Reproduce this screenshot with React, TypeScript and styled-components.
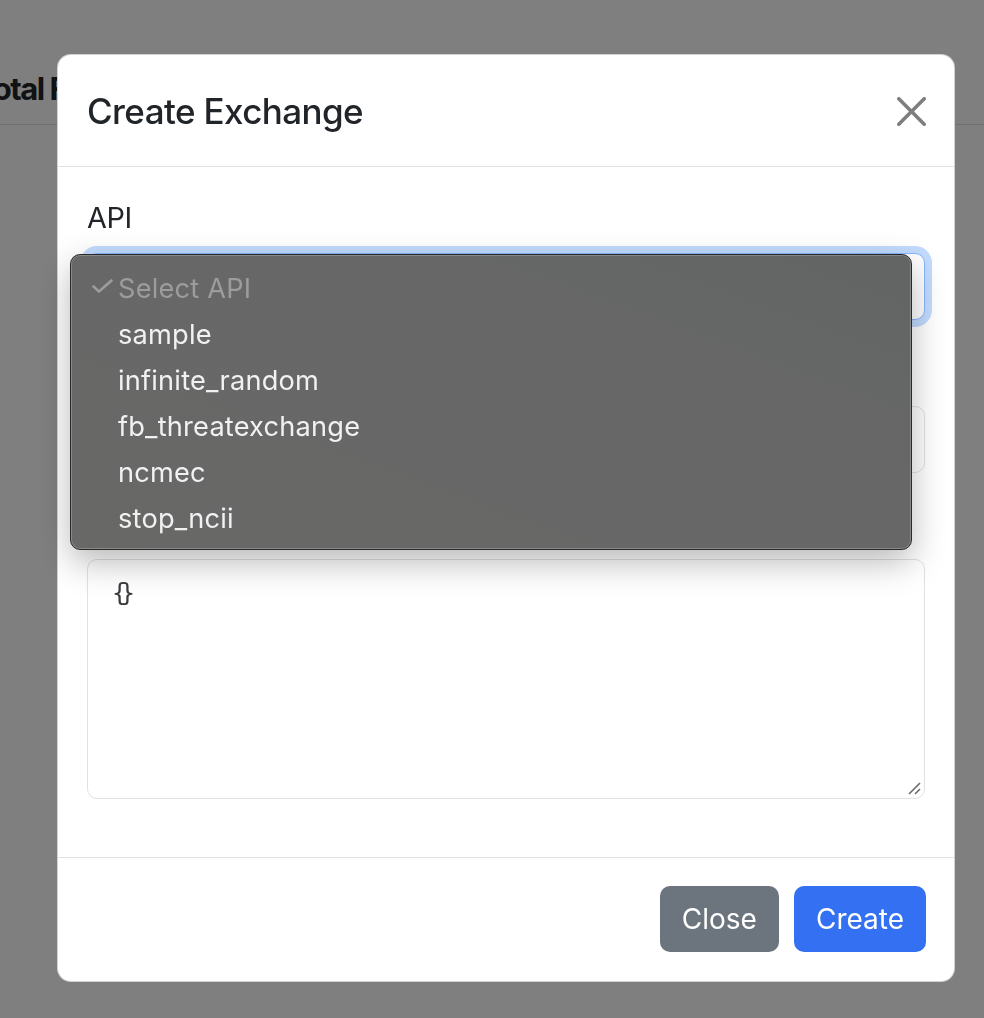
import React from "react";
import styled, { createGlobalStyle } from "styled-components";

const Global = createGlobalStyle`
  html, body { margin: 0; padding: 0; }
  body {
    width: 984px;
    height: 1018px;
    overflow: hidden;
    background: #ffffff;
    font-family: Inter, "Noto Sans", "Liberation Sans", sans-serif;
    color: #212529;
  }
  * { box-sizing: border-box; }
`;

const Page = styled.div`
  width: 984px;
  height: 1018px;
  background: #ffffff;
`;

const PageHeader = styled.div`
  height: 125px;
  border-bottom: 1px solid #dee2e6;
  display: flex;
  align-items: flex-start;
  padding-top: 70px;
  overflow: hidden;
`;

const PageTitle = styled.h2`
  margin: 0 0 0 -24px;
  font-size: 31px;
  line-height: 1.2;
  font-weight: 700;
  letter-spacing: -1.5px;
  color: #212529;
  white-space: nowrap;
`;

const Backdrop = styled.div`
  position: fixed;
  inset: 0;
  background: rgba(0, 0, 0, 0.5);
  padding: 54px 0 0 57px;
`;

const Modal = styled.div`
  width: 898px;
  background: #fff;
  border-radius: 14px;
  border: 1px solid rgba(0, 0, 0, 0.175);
  display: flex;
  flex-direction: column;
`;

const ModalHeader = styled.div`
  display: flex;
  align-items: center;
  justify-content: space-between;
  padding: 29px 28px 28px 29px;
  border-bottom: 1px solid #dee2e6;
`;

const ModalTitle = styled.h5`
  margin: 0;
  font-size: 35px;
  line-height: 54px;
  font-weight: 500;
  color: #212529;
  letter-spacing: -0.6px;
`;

const CloseX = styled.button`
  width: 29px;
  height: 29px;
  padding: 0;
  border: 0;
  background: transparent;
  opacity: 0.5;
  display: flex;
  align-items: center;
  justify-content: center;
  cursor: pointer;
`;

const ModalBody = styled.div`
  padding: 29px 29px 29px 29px;
  display: flex;
  flex-direction: column;
`;

const Field = styled.div`
  margin-bottom: 29px;
  display: flex;
  flex-direction: column;
`;

const Label = styled.label`
  font-size: 28.8px;
  line-height: 43px;
  margin-bottom: 14px;
  letter-spacing: -0.4px;
  color: #212529;
`;

const SelectWrap = styled.div`
  position: relative;
`;

const SelectBox = styled.div<{ $focused?: boolean }>`
  height: 67px;
  border: 1px solid ${(p) => (p.$focused ? "#86b7fe" : "#dee2e6")};
  border-radius: 10px;
  background: #fff;
  box-shadow: ${(p) => (p.$focused ? "0 0 0 7px rgba(13,110,253,0.25)" : "none")};
`;

const Menu = styled.ul`
  position: absolute;
  left: -17px;
  top: 1px;
  width: 842px;
  margin: 0;
  padding: 10px 0 8px 0;
  list-style: none;
  background: linear-gradient(200deg, #626564 0%, #676767 35%, #686867 100%);
  border: 1px solid #2a2a2a;
  border-radius: 10px;
  box-shadow: inset 0 0 0 1px rgba(255, 255, 255, 0.22), 0 12px 34px rgba(0, 0, 0, 0.28);
  z-index: 5;
`;

const MenuItem = styled.li<{ $disabled?: boolean }>`
  height: 46px;
  display: flex;
  align-items: center;
  padding-left: 47px;
  position: relative;
  font-family: Inter, "Noto Sans", sans-serif;
  font-size: 27.2px;
  letter-spacing: 0.2px;
  color: ${(p) => (p.$disabled ? "#9b9c9c" : "#f1f1f1")};
`;

const Check = styled.svg`
  position: absolute;
  left: 21px;
  top: 14px;
`;

const TextArea = styled.div`
  height: 240px;
  border: 1px solid #dee2e6;
  border-radius: 10px;
  padding: 14px 21px 11px 24px;
  font-family: "DejaVu Sans Mono", "Liberation Mono", monospace;
  font-size: 25px;
  line-height: 1.5;
  letter-spacing: -7px;
  color: #3a3d40;
  position: relative;
`;

const Grip = styled.svg`
  position: absolute;
  right: 2px;
  bottom: 2px;
`;

const ModalFooter = styled.div`
  border-top: 1px solid #dee2e6;
  padding: 28px 28px 29px 28px;
  display: flex;
  justify-content: flex-end;
  gap: 15px;
`;

const Button = styled.button<{ $variant: "secondary" | "primary" }>`
  height: 66px;
  padding: 0 22px;
  border: 0;
  border-radius: 10px;
  font-family: Inter, "Noto Sans", sans-serif;
  font-size: 28px;
  color: #fff;
  background: ${(p) => (p.$variant === "primary" ? "#3370f2" : "#6c757d")};
  cursor: pointer;
`;

const apis = ["sample", "infinite_random", "fb_threatexchange", "ncmec", "stop_ncii"];

export default function App() {
  return (
    <>
      <Global />
      <Page>
        <PageHeader>
          <PageTitle>Total Fetched</PageTitle>
        </PageHeader>
      </Page>
      <Backdrop>
        <Modal>
          <ModalHeader>
            <ModalTitle>Create Exchange</ModalTitle>
            <CloseX aria-label="Close">
              <svg width="29" height="29" viewBox="0 0 16 16" fill="#000">
                <path d="M.293.293a1 1 0 0 1 1.414 0L8 6.586 14.293.293a1 1 0 1 1 1.414 1.414L9.414 8l6.293 6.293a1 1 0 0 1-1.414 1.414L8 9.414l-6.293 6.293a1 1 0 0 1-1.414-1.414L6.586 8 .293 1.707a1 1 0 0 1 0-1.414z" />
              </svg>
            </CloseX>
          </ModalHeader>
          <ModalBody>
            <Field>
              <Label>API</Label>
              <SelectWrap>
                <SelectBox $focused />
                <Menu>
                  <MenuItem $disabled>
                    <Check width="21" height="14" viewBox="0 0 21 14">
                      <path d="M1.5 7.5 L7 12.5 L19.5 1.5" fill="none" stroke="#9b9c9c" strokeWidth="2.6" strokeLinecap="round" strokeLinejoin="round" />
                    </Check>
                    Select API
                  </MenuItem>
                  {apis.map((a) => (
                    <MenuItem key={a}>{a}</MenuItem>
                  ))}
                </Menu>
              </SelectWrap>
            </Field>
            <Field>
              <Label>Name</Label>
              <SelectBox />
            </Field>
            <Field>
              <Label>Config</Label>
              <TextArea>
                {"{}"}
                <Grip width="16" height="16" viewBox="0 0 16 16">
                  <path d="M3 14 L14 3 M9 14 L14 9" stroke="#6b6b6b" strokeWidth="1.6" />
                </Grip>
              </TextArea>
            </Field>
          </ModalBody>
          <ModalFooter>
            <Button $variant="secondary">Close</Button>
            <Button $variant="primary">Create</Button>
          </ModalFooter>
        </Modal>
      </Backdrop>
    </>
  );
}
